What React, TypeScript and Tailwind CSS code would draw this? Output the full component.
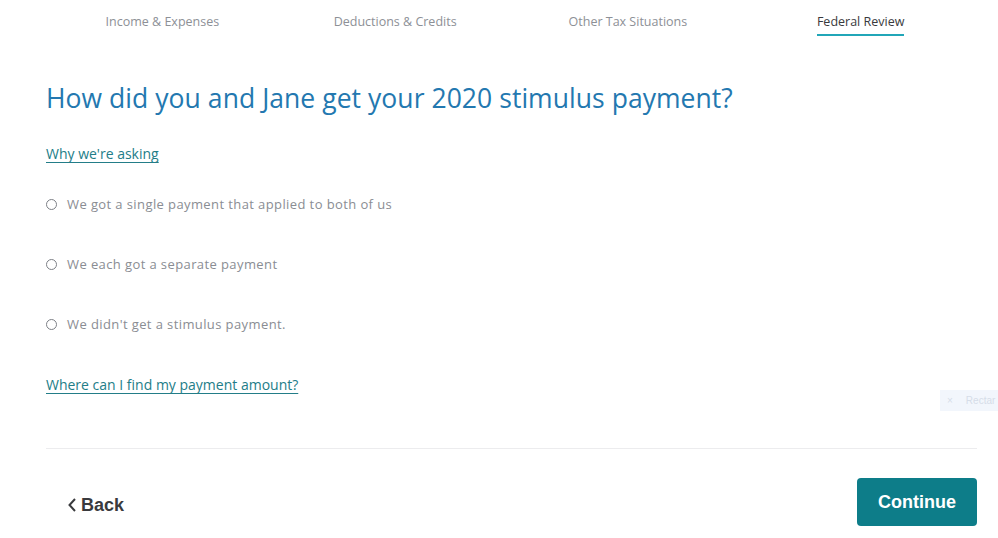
import React from "react";

export default function App() {
  const tabs = ["Income & Expenses", "Deductions & Credits", "Other Tax Situations", "Federal Review"];
  const options = [
    "We got a single payment that applied to both of us",
    "We each got a separate payment",
    "We didn't get a stimulus payment.",
  ];
  return (
    <div className="relative w-[998px] h-[538px] bg-white overflow-hidden" style={{ fontFamily: '"Open Sans", "Lato", sans-serif' }}>
      <div className="px-[46px] pr-[21px]">
        <div className="grid grid-cols-4 h-[36px]">
          {tabs.map((t, i) => (
            <div key={t} className="flex justify-center">
              <div
                className={
                  "pt-[14px] text-[12.5px] leading-[16px] h-[36px] " +
                  (i === 3
                    ? "text-[#393a3d] border-b-[2px] border-[#21a6b8] pb-[4px]"
                    : "text-[#8d9096]")
                }
              >
                {t}
              </div>
            </div>
          ))}
        </div>

        <h1 className="mt-[45px] text-[26.5px] leading-[34px] text-[#2378b0] font-normal tracking-[0.05px]">
          How did you and Jane get your 2020 stimulus payment?
        </h1>

        <a className="block mt-[29px] text-[14px] leading-[20px] text-[#237d88] underline underline-offset-[3px] w-fit">
          Why we're asking
        </a>

        <div className="mt-[30px] flex flex-col gap-[40px]">
          {options.map((o) => (
            <label key={o} className="flex items-center h-[20px]">
              <span className="w-[11px] h-[11px] rounded-full border border-[#7d8086] bg-white" />
              <span className="ml-[10px] text-[13px] leading-[20px] font-normal text-[#8a8d93] tracking-[0.4px]">{o}</span>
            </label>
          ))}
        </div>

        <a className="block mt-[41px] text-[14px] leading-[20px] text-[#237d88] underline underline-offset-[3px] w-fit">
          Where can I find my payment amount?
        </a>

        <div className="mt-[53px] border-t border-[#ececee]" />

        <div className="mt-[29px] flex items-center justify-between">
          <button
            className="ml-[21px] mt-[6px] flex items-center gap-[4px] text-[18px] font-bold text-[#393a3d]"
            style={{ fontFamily: '"Liberation Sans", Arial, sans-serif' }}
          >
            <svg width="10" height="16" viewBox="0 0 10 16" fill="none">
              <path d="M8 2 L2.5 8 L8 14" stroke="#393a3d" strokeWidth="2" />
            </svg>
            Back
          </button>
          <button
            className="w-[120px] h-[48px] rounded-[4px] bg-[#0d7d89] text-white text-[18px] font-bold"
            style={{ fontFamily: '"Liberation Sans", Arial, sans-serif' }}
          >
            Continue
          </button>
        </div>
      </div>

      <div className="absolute left-[940px] top-[390px] w-[70px] h-[21px] bg-[#f2f6fc] flex items-center text-[10px] text-[#d6dde8]" style={{ fontFamily: '"Liberation Sans", Arial, sans-serif' }}>
        <span className="ml-[7px]">×</span>
        <span className="ml-[13px]">Rectar</span>
      </div>
    </div>
  );
}
